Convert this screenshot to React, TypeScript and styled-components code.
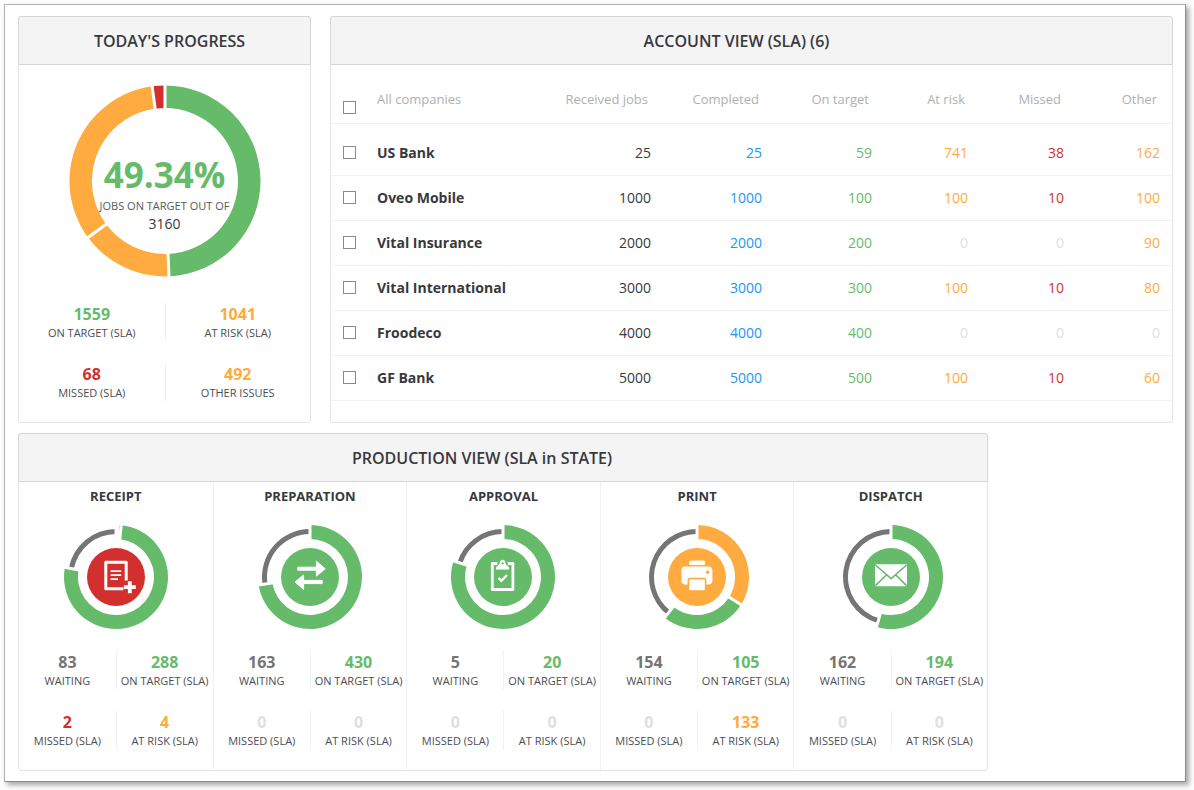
import React from 'react';
import styled, { createGlobalStyle } from 'styled-components';

const color = {
  green: '#66bb6a',
  orange: '#ffab40',
  red: '#d32f2f',
  grey: '#757575',
  blue: '#2196f3',
  muted: '#e0e0e0',
  ink: '#37393d',
};
type Tone = keyof typeof color;

const GlobalStyle = createGlobalStyle`
  *, *::before, *::after { box-sizing: border-box; }
  body {
    margin: 0;
    background: #fcfcfc;
    color: ${color.ink};
    font-family: "Open Sans", "Noto Sans", sans-serif;
  }
`;

const Frame = styled.main`
  margin: 4px 8px 8px 4px;
  padding: 11px 12px 10px 13px;
  background: #fff;
  border: 1px solid #b4b4b4;
  border-right-color: #8c8c8c;
  border-bottom-color: #8c8c8c;
  box-shadow: 3px 3px 5px rgba(0, 0, 0, 0.35);
  display: flex;
  flex-direction: column;
  gap: 10px;
`;

const TopRow = styled.div`
  display: grid;
  grid-template-columns: 293px minmax(0, 1fr);
  gap: 19px;
`;

const Panel = styled.section<{ $maxWidth?: string }>`
  max-width: ${(p) => p.$maxWidth ?? 'none'};
  border: 1px solid #e4e4e4;
  border-radius: 3px;
  display: flex;
  flex-direction: column;
`;

const PanelTitle = styled.h2<{ $left?: number; $right?: number }>`
  margin: -1px -1px 0;
  height: 49px;
  padding: 0 ${(p) => p.$right ?? 0}px 0 ${(p) => p.$left ?? 0}px;
  border: 1px solid #d6d6d6;
  border-radius: 3px 3px 0 0;
  background: #f4f4f4;
  font-size: 16px;
  font-weight: 600;
  line-height: 48px;
  text-align: center;
`;

const ProgressBody = styled.div`
  display: flex;
  flex-direction: column;
  align-items: center;
  gap: 25px;
  padding: 20px 0;
`;

const DonutStack = styled.div`
  display: grid;
  place-items: center;
  > * { grid-area: 1 / 1; }
`;

const DonutText = styled.div`
  display: flex;
  flex-direction: column;
  align-items: center;
  padding-top: 24px;
`;

const Percent = styled.strong`
  color: ${color.green};
  font-size: 35px;
  font-weight: 700;
  line-height: 42px;
`;

const Caption = styled.span`
  font-size: 11px;
  line-height: 20px;
  color: #55595d;
`;

const Total = styled.span`
  font-size: 14px;
  line-height: 16px;
`;

const StatGrid = styled.div`
  align-self: stretch;
  display: grid;
  grid-template-columns: 1fr 1fr;
  row-gap: 20px;
`;

const StatCell = styled.div`
  height: 40px;
  display: flex;
  flex-direction: column;
  align-items: center;
  padding-top: 2px;
  white-space: nowrap;
  &:nth-child(even) { border-left: 1px solid #f3f3f3; }
`;

const StatValue = styled.strong<{ $tone: Tone }>`
  color: ${(p) => color[p.$tone]};
  font-size: 16px;
  font-weight: 700;
  line-height: 20px;
`;

const StatLabel = styled.span`
  font-size: 11px;
  line-height: 18px;
  color: #4a4e52;
`;

const Table = styled.table`
  width: 100%;
  table-layout: fixed;
  border-collapse: collapse;
  margin-bottom: 20px;
`;

const Col = styled.col<{ $width?: number }>`
  width: ${(p) => (p.$width ? `${p.$width}px` : 'auto')};
`;

const HeadRow = styled.tr`
  height: 58px;
  border-bottom: 1px solid #f0f0f0;
`;

const HeadCell = styled.th<{ $start?: boolean }>`
  padding: 18px ${(p) => (p.$start ? 0 : 15)}px 7px 0;
  color: #b0b0b0;
  font-size: 13px;
  font-weight: 400;
  line-height: 20px;
  text-align: ${(p) => (p.$start ? 'left' : 'right')};
`;

const CheckCell = styled.td<{ $head?: boolean }>`
  padding: ${(p) => (p.$head ? '28px' : '0')} 0 0 12px;
  line-height: 13px;
`;

const Check = styled.input`
  appearance: none;
  display: block;
  width: 13px;
  height: 13px;
  margin: 0;
  border: 1px solid #8a8a8a;
  background: #fff;
  &:checked { background: ${color.blue}; }
`;

const Row = styled.tr`
  height: 45px;
  border-bottom: 1px solid #f3f3f3;
  &:first-child { height: 52px; }
  &:first-child > * { padding-top: 7px; }
`;

const Company = styled.th`
  padding: 0;
  font-size: 14px;
  font-weight: 700;
  text-align: left;
`;

const Num = styled.td<{ $tone: Tone }>`
  padding: 0 12px 0 0;
  color: ${(p) => color[p.$tone]};
  font-size: 14px;
  text-align: right;
`;

const Stages = styled.div`
  display: grid;
  grid-template-columns: repeat(5, minmax(0, 1fr));
`;

const Stage = styled.article`
  display: flex;
  flex-direction: column;
  align-items: center;
  padding: 4px 0 20px;
  & + & { border-left: 1px solid #f3f3f3; }
`;

const StageTitle = styled.h3`
  margin: 0 0 18px;
  font-size: 13px;
  font-weight: 700;
  line-height: 20px;
`;

const StageDonut = styled.div`
  display: flex;
  margin-bottom: 20px;
`;

type Slice = { value: number; tone: Tone; outer: number; inner: number };

const point = (r: number, turn: number) => {
  const a = turn * 2 * Math.PI - Math.PI / 2;
  return `${(r * Math.cos(a)).toFixed(3)} ${(r * Math.sin(a)).toFixed(3)}`;
};

function Ring({ slices, size, children }: { slices: Slice[]; size: number; children?: React.ReactNode }) {
  const shown = slices.filter((s) => s.value > 0);
  const sum = shown.reduce((n, s) => n + s.value, 0);
  const starts = shown.map((_, i) => shown.slice(0, i).reduce((n, s) => n + s.value, 0) / sum);
  return (
    <svg width={size} height={size} viewBox={`${-size / 2} ${-size / 2} ${size} ${size}`} aria-hidden="true">
      {shown.map((s, i) => {
        const from = starts[i];
        const to = from + s.value / sum;
        const large = to - from > 0.5 ? 1 : 0;
        return (
          <path
            key={i}
            fill={color[s.tone]}
            d={`M${point(s.outer, from)} A${s.outer} ${s.outer} 0 ${large} 1 ${point(s.outer, to)} L${point(s.inner, to)} A${s.inner} ${s.inner} 0 ${large} 0 ${point(s.inner, from)} Z`}
          />
        );
      })}
      {shown.map((s, i) => (
        <path
          key={i}
          d={`M${point(s.inner - 8, starts[i])} L${point(size / 2 + 2, starts[i])}`}
          stroke="#fff"
          strokeWidth="3"
        />
      ))}
      {children}
    </svg>
  );
}

const icons: Record<string, React.ReactNode> = {
  RECEIPT: (
    <g fill="none" stroke="#fff">
      <path d="M10.2 3.5V-14.8H-10.2V11.8H7.4" strokeWidth="3" strokeLinejoin="round" />
      <path d="M-5.4 -5.8H5.2M-5.4 -1.8H5.2M-5.4 2.2H2" strokeWidth="1.8" />
      <path d="M13.8 4.2V16.2M7.8 10.2H19.8" strokeWidth="3.8" />
    </g>
  ),
  PREPARATION: (
    <path
      fill="#fff"
      stroke="#fff"
      strokeLinejoin="round"
      d="M-12.2 -9.8H6.4V-15.8L15.2 -8.2L6.4 -.8V-6.8H-12.2ZM12.2 3.4H-6.4V-2L-15 5L-6.4 12.4V6.6H12.2Z"
    />
  ),
  APPROVAL: (
    <g>
      <path d="M-5.6 -13.5H-10.7V12.5H9.9V-13.5H4.8" fill="none" stroke="#fff" strokeWidth="2.8" strokeLinejoin="round" />
      <path
        fill="#fff"
        d="M-7 -7.6C-7 -11.6 -4.4 -11 -3.4 -13.2C-3.4 -15.6 -2 -17.2 -.4 -17.2S2.6 -15.6 2.6 -13.2C3.6 -11 6.2 -11.6 6.2 -7.6Z"
      />
      <circle cx="-.4" cy="-13.6" r="1.1" fill={color.green} />
      <path d="M-4.6 .8L-1.6 3.8L4 -2" fill="none" stroke="#fff" strokeWidth="2.4" />
    </g>
  ),
  PRINT: (
    <g>
      <rect x="-8" y="-16.4" width="16" height="4.4" rx="1.6" fill="#fff" />
      <rect x="-15.6" y="-10.6" width="31" height="18" rx="4" fill="#fff" />
      <circle cx="10.6" cy="-4.8" r="1.7" fill={color.orange} />
      <rect x="-8.6" y="1.6" width="17.2" height="12.4" rx="1.5" fill="#fff" stroke={color.orange} strokeWidth="1.6" />
    </g>
  ),
  DISPATCH: (
    <g>
      <rect x="-16" y="-12.8" width="32" height="22" rx="1" fill="#fff" />
      <path d="M-15.6 -12L.2 1.6L15.6 -12M-15.6 8.6L-4.6 -2M15.6 8.6L4.8 -2" fill="none" stroke={color.green} strokeWidth="1.6" />
    </g>
  ),
};

type Figures = { value: number; label: string; tone: Tone };

function Stats({ items }: { items: Figures[] }) {
  return (
    <StatGrid>
      {items.map((s) => (
        <StatCell key={s.label}>
          <StatValue $tone={s.value === 0 ? 'muted' : s.tone}>{s.value}</StatValue>
          <StatLabel>{s.label}</StatLabel>
        </StatCell>
      ))}
    </StatGrid>
  );
}

const stages: { name: string; waiting: number; target: number; missed: number; risk: number; tone: Tone }[] = [
  { name: 'RECEIPT', waiting: 83, target: 288, missed: 2, risk: 4, tone: 'red' },
  { name: 'PREPARATION', waiting: 163, target: 430, missed: 0, risk: 0, tone: 'green' },
  { name: 'APPROVAL', waiting: 5, target: 20, missed: 0, risk: 0, tone: 'green' },
  { name: 'PRINT', waiting: 154, target: 105, missed: 0, risk: 133, tone: 'orange' },
  { name: 'DISPATCH', waiting: 162, target: 194, missed: 0, risk: 0, tone: 'green' },
];

const columns = ['Received jobs', 'Completed', 'On target', 'At risk', 'Missed', 'Other'];
const tones: Tone[] = ['ink', 'blue', 'green', 'orange', 'red', 'orange'];
const accounts: [string, number[]][] = [
  ['US Bank', [25, 25, 59, 741, 38, 162]],
  ['Oveo Mobile', [1000, 1000, 100, 100, 10, 100]],
  ['Vital Insurance', [2000, 2000, 200, 0, 0, 90]],
  ['Vital International', [3000, 3000, 300, 100, 10, 80]],
  ['Froodeco', [4000, 4000, 400, 0, 0, 0]],
  ['GF Bank', [5000, 5000, 500, 100, 10, 60]],
];

export default function App() {
  return (
    <>
      <GlobalStyle />
      <Frame>
        <TopRow>
          <Panel>
            <PanelTitle $left={10}>TODAY'S PROGRESS</PanelTitle>
            <ProgressBody>
              <DonutStack>
                <Ring
                  size={192}
                  slices={[
                    { value: 1559, tone: 'green', outer: 95.5, inner: 73 },
                    { value: 492, tone: 'orange', outer: 95.5, inner: 73 },
                    { value: 1041, tone: 'orange', outer: 95.5, inner: 73 },
                    { value: 68, tone: 'red', outer: 95.5, inner: 73 },
                  ]}
                />
                <DonutText>
                  <Percent>49.34%</Percent>
                  <Caption>JOBS ON TARGET OUT OF</Caption>
                  <Total>3160</Total>
                </DonutText>
              </DonutStack>
              <Stats
                items={[
                  { value: 1559, label: 'ON TARGET (SLA)', tone: 'green' },
                  { value: 1041, label: 'AT RISK (SLA)', tone: 'orange' },
                  { value: 68, label: 'MISSED (SLA)', tone: 'red' },
                  { value: 492, label: 'OTHER ISSUES', tone: 'orange' },
                ]}
              />
            </ProgressBody>
          </Panel>

          <Panel>
            <PanelTitle $right={30}>ACCOUNT VIEW (SLA) (6)</PanelTitle>
            <Table>
              <colgroup>
                <Col $width={46} />
                <Col />
                <Col $width={111} />
                <Col $width={111} />
                <Col $width={110} />
                <Col $width={96} />
                <Col $width={96} />
                <Col $width={96} />
              </colgroup>
              <thead>
                <HeadRow>
                  <CheckCell $head>
                    <Check type="checkbox" aria-label="Select all companies" />
                  </CheckCell>
                  <HeadCell $start scope="col">All companies</HeadCell>
                  {columns.map((c) => (
                    <HeadCell key={c} scope="col">{c}</HeadCell>
                  ))}
                </HeadRow>
              </thead>
              <tbody>
                {accounts.map(([name, values]) => (
                  <Row key={name}>
                    <CheckCell>
                      <Check type="checkbox" aria-label={`Select ${name}`} />
                    </CheckCell>
                    <Company scope="row">{name}</Company>
                    {values.map((v, i) => (
                      <Num key={i} $tone={v === 0 ? 'muted' : tones[i]}>{v}</Num>
                    ))}
                  </Row>
                ))}
              </tbody>
            </Table>
          </Panel>
        </TopRow>

        <Panel $maxWidth="970px">
          <PanelTitle $right={42}>PRODUCTION VIEW (SLA in STATE)</PanelTitle>
          <Stages>
            {stages.map((s) => (
              <Stage key={s.name}>
                <StageTitle>{s.name}</StageTitle>
                <StageDonut>
                  <Ring
                    size={106}
                    slices={[
                      { value: s.missed, tone: 'red', outer: 52, inner: 38 },
                      { value: s.risk, tone: 'orange', outer: 52, inner: 38 },
                      { value: s.target, tone: 'green', outer: 52, inner: 38 },
                      { value: s.waiting, tone: 'grey', outer: 48, inner: 43 },
                    ]}
                  >
                    <circle r="29" fill={color[s.tone]} />
                    {icons[s.name]}
                  </Ring>
                </StageDonut>
                <Stats
                  items={[
                    { value: s.waiting, label: 'WAITING', tone: 'grey' },
                    { value: s.target, label: 'ON TARGET (SLA)', tone: 'green' },
                    { value: s.missed, label: 'MISSED (SLA)', tone: 'red' },
                    { value: s.risk, label: 'AT RISK (SLA)', tone: 'orange' },
                  ]}
                />
              </Stage>
            ))}
          </Stages>
        </Panel>
      </Frame>
    </>
  );
}
